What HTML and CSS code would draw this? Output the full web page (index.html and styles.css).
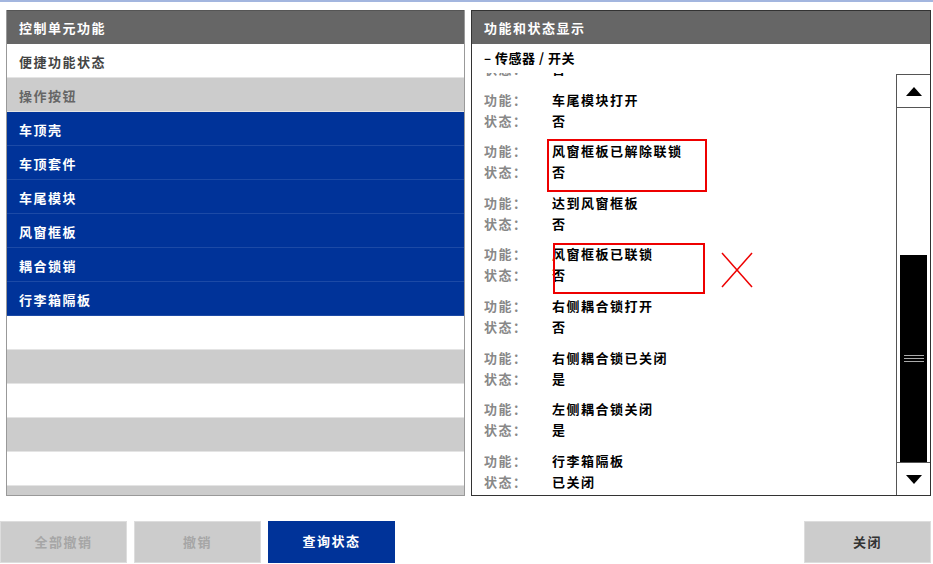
FILE: index.html
```html
<!DOCTYPE html>
<html lang="zh-CN">
<head>
  <meta charset="UTF-8">
  <title>控制单元功能</title>
  <link rel="stylesheet" href="styles.css">
</head>
<body>
  <div id="screen">
    <div class="panels">
      <div class="panel left-panel">
        <div class="panel-title">控制单元功能</div>
        <div class="row row-white dark">便捷功能状态</div>
        <div class="row row-grey mid">操作按钮</div>
        <div class="row row-blue">车顶壳</div>
        <div class="row row-blue">车顶套件</div>
        <div class="row row-blue">车尾模块</div>
        <div class="row row-blue">风窗框板</div>
        <div class="row row-blue">耦合锁销</div>
        <div class="row row-blue">行李箱隔板</div>
        <div class="row row-white"></div>
        <div class="row row-grey"></div>
        <div class="row row-white"></div>
        <div class="row row-grey"></div>
        <div class="row row-white"></div>
        <div class="row row-grey"></div>
      </div>

      <div class="panel right-panel">
        <div class="panel-title">功能和状态显示</div>
        <div class="sub-title">– 传感器 / 开关</div>
        <div class="list-wrap">
          <div class="list">
            <div class="item first">
              <div class="line"><span class="lbl">状态：</span><span class="val">否</span></div>
            </div>
            <div class="item">
              <div class="line"><span class="lbl">功能：</span><span class="val">车尾模块打开</span></div>
              <div class="line"><span class="lbl">状态：</span><span class="val">否</span></div>
            </div>
            <div class="item">
              <div class="line"><span class="lbl">功能：</span><span class="val">风窗框板已解除联锁</span></div>
              <div class="line"><span class="lbl">状态：</span><span class="val">否</span></div>
            </div>
            <div class="item">
              <div class="line"><span class="lbl">功能：</span><span class="val">达到风窗框板</span></div>
              <div class="line"><span class="lbl">状态：</span><span class="val">否</span></div>
            </div>
            <div class="item">
              <div class="line"><span class="lbl">功能：</span><span class="val">风窗框板已联锁</span></div>
              <div class="line"><span class="lbl">状态：</span><span class="val">否</span></div>
            </div>
            <div class="item">
              <div class="line"><span class="lbl">功能：</span><span class="val">右侧耦合锁打开</span></div>
              <div class="line"><span class="lbl">状态：</span><span class="val">否</span></div>
            </div>
            <div class="item">
              <div class="line"><span class="lbl">功能：</span><span class="val">右侧耦合锁已关闭</span></div>
              <div class="line"><span class="lbl">状态：</span><span class="val">是</span></div>
            </div>
            <div class="item">
              <div class="line"><span class="lbl">功能：</span><span class="val">左侧耦合锁关闭</span></div>
              <div class="line"><span class="lbl">状态：</span><span class="val">是</span></div>
            </div>
            <div class="item">
              <div class="line"><span class="lbl">功能：</span><span class="val">行李箱隔板</span></div>
              <div class="line"><span class="lbl">状态：</span><span class="val">已关闭</span></div>
            </div>
          </div>
          <div class="scrollbar">
            <div class="sb-btn">
              <svg width="16" height="9" viewBox="0 0 16 9"><polygon points="0,9 16,9 8,0" fill="#000"/></svg>
            </div>
            <div class="sb-track">
              <div class="sb-space"></div>
              <div class="sb-thumb"><span class="grip"></span></div>
            </div>
            <div class="sb-btn down">
              <svg width="16" height="9" viewBox="0 0 16 9"><polygon points="0,0 16,0 8,9" fill="#000"/></svg>
            </div>
          </div>
        </div>
      </div>
    </div>

    <div class="buttons">
      <div class="btn disabled">全部撤销</div>
      <div class="btn disabled">撤销</div>
      <div class="btn primary">查询状态</div>
      <div class="btn close">关闭</div>
    </div>

    <!-- annotations drawn over the screenshot -->
    <div class="mark box1"></div>
    <div class="mark box2"></div>
    <svg class="cross" width="32" height="36" viewBox="0 0 32 36">
      <line x1="1" y1="1" x2="31" y2="35" stroke="#e00" stroke-width="1.5"/>
      <line x1="1" y1="35" x2="31" y2="1" stroke="#e00" stroke-width="1.5"/>
    </svg>
  </div>
</body>
</html>
```

FILE: styles.css
```css
body {
  margin: 0;
  font-family: "Noto Sans CJK SC", "Noto Sans", sans-serif;
  font-size: 13px;
  background: #fff;
}
#screen {
  position: relative;
  width: 933px;
  height: 564px;
  box-sizing: border-box;
  border-top: 2px solid #a3b6df;
  overflow: hidden;
}
.panels {
  display: flex;
  gap: 6px;
  padding: 8px 2px 0 6px;
  height: 486px;
}
.panel {
  display: flex;
  flex-direction: column;
  box-sizing: border-box;
  overflow: hidden;
}
.left-panel {
  width: 459px;
  border: 1px solid #999;
  border-top: none;
}
.right-panel {
  width: 460px;
  border: 1px solid #333;
  border-top: none;
}
.panel-title {
  height: 34px;
  flex: none;
  background: #666;
  color: #fff;
  font-weight: bold;
  letter-spacing: 1.5px;
  line-height: 33px;
  padding-left: 12px;
  border-top: 1px solid #555;
  box-sizing: border-box;
}
.right-panel .panel-title {
  border-top-color: #333;
}

/* left list */
.row {
  height: 34px;
  flex: none;
  box-sizing: border-box;
  line-height: 35px;
  padding-left: 12px;
  font-weight: bold;
  letter-spacing: 1.5px;
  border-bottom: 1px solid #e4e4e4;
}
.row-white { background: #fff; }
.row-grey { background: #ccc; }
.row-blue {
  background: #003399;
  color: #fff;
  border-bottom-color: #1c4aa6;
}
.dark { color: #444; }
.mid { color: #666; }

/* right list */
.sub-title {
  height: 29px;
  flex: none;
  padding-left: 12px;
  line-height: 28px;
  font-weight: bold;
  letter-spacing: 0.5px;
  color: #000;
}
.list-wrap {
  flex: 1;
  display: flex;
  overflow: hidden;
}
.list {
  flex: 1;
  overflow: hidden;
  padding-left: 12px;
}
.item {
  height: 51.6px;
  box-sizing: border-box;
}
.item.first {
  height: 30.6px;
  margin-top: -15px;
}
.line {
  height: 21px;
  line-height: 21px;
  display: flex;
  letter-spacing: 1.5px;
}
.lbl {
  width: 68px;
  color: #888;
  font-weight: bold;
}
.val {
  color: #000;
  font-weight: bold;
}

/* scrollbar */
.scrollbar {
  width: 33px;
  flex: none;
  display: flex;
  flex-direction: column;
  border-left: 1px solid #555;
  border-top: 1px solid #555;
  margin-top: 1px;
}
.sb-btn {
  height: 33px;
  flex: none;
  display: flex;
  align-items: center;
  justify-content: center;
  border-bottom: 1px solid #555;
  box-sizing: border-box;
}
.sb-btn.down {
  border-bottom: none;
  border-top: 1px solid #555;
}
.sb-track {
  flex: 1;
  display: flex;
  flex-direction: column;
}
.sb-space {
  height: 147px;
}
.sb-thumb {
  flex: 1;
  margin: 0 3px;
  background: #000;
  display: flex;
  align-items: center;
  justify-content: center;
}
.grip {
  width: 20px;
  height: 7px;
  border-top: 1px solid #aaa;
  border-bottom: 1px solid #aaa;
  background: linear-gradient(#000 2px, #aaa 2px, #aaa 3px, #000 3px);
  box-sizing: border-box;
}

/* bottom buttons */
.buttons {
  display: flex;
  gap: 7px;
  margin-top: 25px;
  padding-right: 2px;
}
.btn {
  width: 127px;
  height: 42px;
  line-height: 39px;
  text-align: center;
  font-weight: bold;
  letter-spacing: 1.5px;
  box-sizing: border-box;
}
.btn.disabled {
  background: #ccc;
  color: #a6a6a6;
  border: 1px solid #ddd;
}
.btn.primary {
  background: #003399;
  color: #fff;
}
.btn.close {
  margin-left: auto;
  background: #ccc;
  color: #333;
  border: 1px solid #ddd;
}

/* red annotations */
.mark {
  position: absolute;
  border: 2px solid #e00;
  box-sizing: border-box;
}
.box1 {
  left: 547px;
  top: 137px;
  width: 160px;
  height: 53px;
}
.box2 {
  left: 553px;
  top: 241px;
  width: 152px;
  height: 51px;
}
.cross {
  position: absolute;
  left: 721px;
  top: 250px;
}
```
